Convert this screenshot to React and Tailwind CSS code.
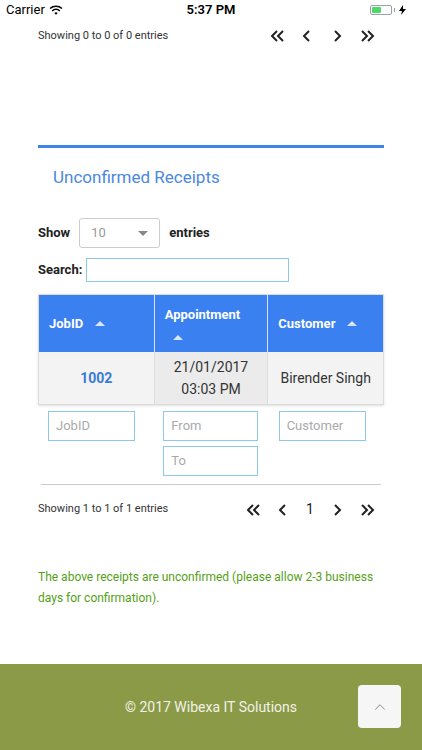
import { ChevronUp } from 'lucide-react';

const font = { fontFamily: 'Roboto, "Noto Sans", sans-serif' };

function Pager({ page }) {
  return (
    <div className="flex items-center">
      <svg width="30" height="14" viewBox="0 0 30 14"><path d="M15 2 L10 7 L15 12 M21 2 L16 7 L21 12" fill="none" stroke="#222" strokeWidth="2" /></svg>
      <svg width="30" height="14" viewBox="0 0 30 14"><path d="M17 2 L12 7 L17 12" fill="none" stroke="#222" strokeWidth="2" /></svg>
      {page && <span className="w-[24px] text-center text-[14px] text-[#222]">{page}</span>}
      <svg width="30" height="14" viewBox="0 0 30 14"><path d="M13 2 L18 7 L13 12" fill="none" stroke="#222" strokeWidth="2" /></svg>
      <svg width="30" height="14" viewBox="0 0 30 14"><path d="M10 2 L15 7 L10 12 M16 2 L21 7 L16 12" fill="none" stroke="#222" strokeWidth="2" /></svg>
    </div>
  );
}

function SortArrow() {
  return <span className="inline-block h-0 w-0 border-x-[5px] border-b-[5px] border-x-transparent border-b-white/80" />;
}

export default function App() {
  return (
    <div className="relative flex h-[750px] w-[422px] flex-col overflow-hidden bg-white" style={font}>
      {/* status bar */}
      <div className="flex h-[20px] items-center justify-between px-[6px] text-[13px] text-black">
        <div className="flex items-center gap-1">
          <span>Carrier</span>
          <svg width="14" height="10" viewBox="0 0 14 10">
            <path d="M1 3.5 A9 9 0 0 1 13 3.5" fill="none" stroke="#000" strokeWidth="1.6" />
            <path d="M3.2 5.8 A6 6 0 0 1 10.8 5.8" fill="none" stroke="#000" strokeWidth="1.6" />
            <path d="M5.3 8 L7 9.8 L8.7 8 A2.5 2.5 0 0 0 5.3 8 Z" fill="#000" />
          </svg>
        </div>
        <span className="absolute left-1/2 -translate-x-1/2 text-[13px] font-semibold">5:37 PM</span>
        <div className="flex items-center gap-[2px] pr-[10px]">
          <div className="flex h-[10px] w-[22px] items-center rounded-[2px] border border-gray-400 p-[1px]">
            <div className="h-full w-[9px] rounded-[1px] bg-[#4cd964]" />
          </div>
          <div className="h-[4px] w-[1px] bg-gray-400" />
          <svg width="7" height="10" viewBox="0 0 7 10" className="ml-[2px]"><path d="M4 0 L0 6 L3 6 L2 10 L7 4 L4 4 Z" fill="#000" /></svg>
        </div>
      </div>

      <div className="flex items-center justify-between pl-[38px] pr-[40px] pt-[8px]">
        <span className="text-[11px] text-[#333]">Showing 0 to 0 of 0 entries</span>
        <Pager />
      </div>

      <div className="mx-[38px] mt-[100px] h-[3px] bg-[#3d85e8]" />
      <h2 className="mt-[17px] pl-[53px] text-[17px] text-[#4b88de]">Unconfirmed Receipts</h2>

      <div className="mt-[28px] flex items-center px-[38px] text-[13px] font-bold text-[#222]">
        <span>Show</span>
        <div className="ml-[9px] flex h-[30px] w-[81px] items-center justify-between rounded-[3px] border border-[#ccc] px-[11px] font-normal text-[#999]">
          <span>10</span>
          <span className="h-0 w-0 border-x-[5px] border-t-[5px] border-x-transparent border-t-[#888]" />
        </div>
        <span className="ml-[9px]">entries</span>
      </div>

      <div className="mt-[10px] flex items-center px-[38px] text-[13px] font-bold text-[#222]">
        <span>Search:</span>
        <div className="ml-[4px] h-[24px] w-[203px] border border-[#8cc8ea]" />
      </div>

      {/* table */}
      <div className="mx-[38px] mt-[12px] border border-[#ddd] shadow-sm">
        <div className="grid h-[57px] grid-cols-3 bg-[#3a80f0] text-[13px] font-bold text-white">
          <div className="flex items-center gap-[12px] pl-[10px]">JobID <SortArrow /></div>
          <div className="flex flex-col justify-center gap-[5px] border-x border-[#d5e2f7] pl-[10px]">
            <span>Appointment</span>
            <span className="ml-[8px] leading-none"><SortArrow /></span>
          </div>
          <div className="flex items-center gap-[12px] pl-[10px]">Customer <SortArrow /></div>
        </div>
        <div className="grid h-[52px] grid-cols-3 text-[14px] text-[#333]">
          <div className="flex items-center justify-center bg-[#f3f3f3] font-bold text-[#3a7bd5]">1002</div>
          <div className="flex flex-col items-center justify-center border-x border-[#ddd] bg-[#ebebeb] leading-[22px]">
            <span>21/01/2017</span>
            <span>03:03 PM</span>
          </div>
          <div className="flex items-center justify-center bg-[#f3f3f3]">Birender Singh</div>
        </div>
      </div>

      <div className="mx-[38px] mt-[6px] grid grid-cols-3 text-[13px] text-[#aaa]">
        <div className="pl-[10px]">
          <div className="flex h-[30px] w-[87px] items-center border border-[#8cc8ea] px-[7px]">JobID</div>
        </div>
        <div className="flex flex-col gap-[5px] pl-[10px]">
          <div className="flex h-[30px] w-[95px] items-center border border-[#8cc8ea] px-[7px]">From</div>
          <div className="flex h-[30px] w-[95px] items-center border border-[#8cc8ea] px-[7px]">To</div>
        </div>
        <div className="pl-[10px]">
          <div className="flex h-[30px] w-[87px] items-center border border-[#8cc8ea] px-[7px]">Customer</div>
        </div>
      </div>

      <div className="mx-[41px] mt-[8px] h-px bg-[#ccc]" />

      <div className="mt-[14px] flex items-center justify-between pl-[38px] pr-[40px]">
        <span className="text-[11px] text-[#333]">Showing 1 to 1 of 1 entries</span>
        <Pager page="1" />
      </div>

      <p className="mt-[47px] px-[38px] text-[12px] leading-[21px] text-[#56a018]">
        The above receipts are unconfirmed (please allow 2-3 business days for confirmation).
      </p>

      <footer className="mt-auto flex h-[86px] items-center justify-center bg-[#8b9a47] text-[14px] text-[#f2f2e8]">
        © 2017 Wibexa IT Solutions
      </footer>
      <button className="absolute bottom-[22px] right-[21px] flex h-[43px] w-[43px] items-center justify-center rounded-[4px] bg-[#f6f6f6]">
        <ChevronUp size={18} strokeWidth={1} className="text-[#666]" />
      </button>
    </div>
  );
}
